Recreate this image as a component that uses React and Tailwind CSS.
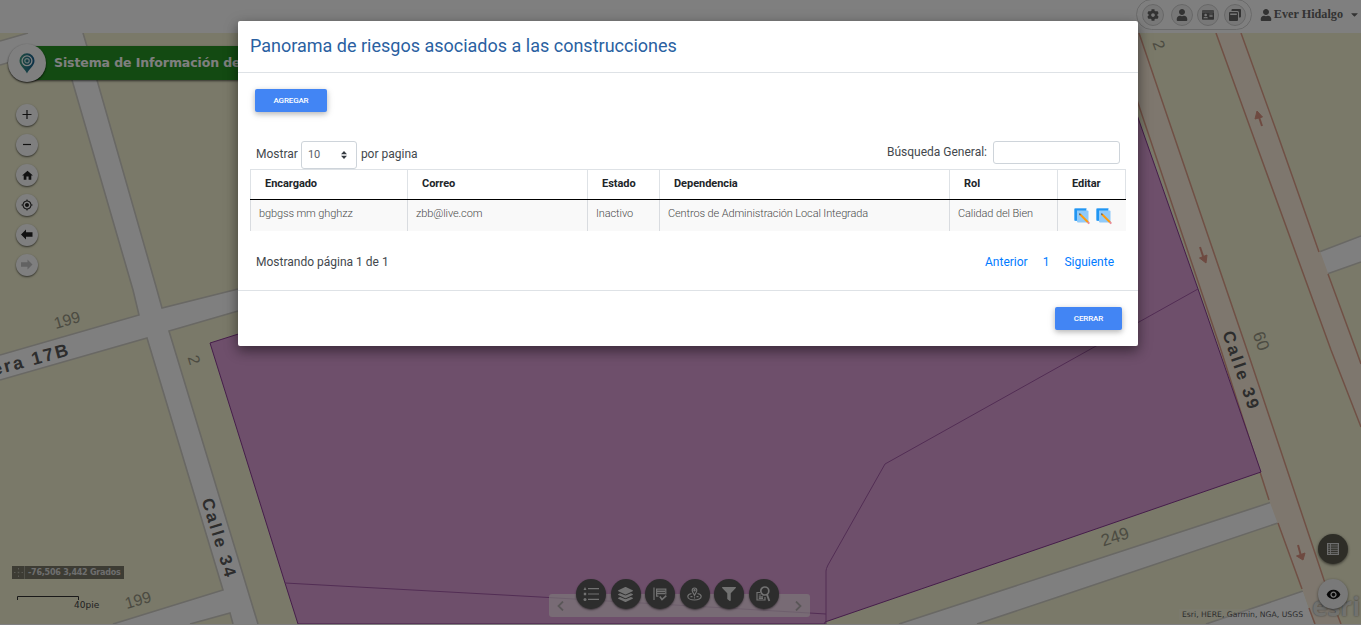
import React from "react";
import { FaCog, FaUser, FaIdCard, FaFilter, FaLayerGroup, FaCaretDown } from "react-icons/fa";
import { MdHome, MdMyLocation, MdVisibility } from "react-icons/md";

const LAND = "#f4f2d2";
const EDGE = "#d2d0c8";

function MapCanvas() {
  return (
    <svg className="block h-[591px] w-full shrink-0" viewBox="0 33 1361 591" preserveAspectRatio="none">
      <rect x="0" y="33" width="1361" height="591" fill={LAND} />
      <g fill="#ffffff">
        <path d="M0 41 L28 33 H83 L97 80 L157 290 L162 308 L238 289 V311 L169 331 L258 624 H233 L223 590 L147 338 L0 380 V355 L139 315 L133 290 L72 80 L62 47 L0 65Z" />
        <path d="M113 624 L223 590 L235 590 L235 612 L190 624Z" />
        <path d="M899 624 L1061 571 L1272 502 L1278 523 L1061 596 L977 624Z" />
        <path d="M1206 624 L1303 591 L1314 624Z" />
        <path d="M1319 252 L1361 236 V262 L1327 274Z" />
      </g>
      <g fill="none" stroke={EDGE} strokeWidth="1.6">
        <path d="M0 41 L28 33 M83 33 L97 80 L157 290 L162 308 L238 289 M0 65 L62 47 L72 80 L133 290 L139 315 L0 355" />
        <path d="M0 380 L147 338 L223 590 L113 624 M190 624 L230 613 L233 624 M258 624 L169 331 L238 311" />
        <path d="M899 624 L1061 571 L1272 502 M977 624 L1061 596 L1278 523 M1206 624 L1303 591 M1319 252 L1361 236 M1361 262 L1327 274" />
      </g>
      <g fill="#fcefdc">
        <path d="M1113 33 H1139 L1172 130 L1247 350 L1324 580 L1341 624 H1315 L1302 589 L1269 500 L1220 350 L1138 103Z" />
        <path d="M1216 33 H1241 L1276 130 L1356 350 L1361 364 V427 L1331 350 L1251 130Z" />
      </g>
      <g fill="none" stroke="#e0a08a" strokeWidth="1.5">
        <path d="M1113 33 L1138 103 L1220 347 L1269 500 M1278 523 L1302 589 M1139 33 L1172 130 L1247 350 L1324 580 L1341 624 M1309 608 L1315 624" />
        <path d="M1216 33 L1251 130 L1331 350 L1361 427 M1241 33 L1276 130 L1319 252 M1328 274 L1356 350 L1361 364" />
      </g>
      <g fill="#dd9482" stroke="#dd9482" strokeWidth="2">
        <path d="M1262 126 L1258 114" />
        <path d="M1257 111 L1255 119 L1262.500 117Z" strokeWidth="1" />
        <path d="M1200 247 L1204 259" />
        <path d="M1206 263 L1199.500 258 L1207 255Z" strokeWidth="1" />
        <path d="M1298 545 L1301 556" />
        <path d="M1303 560 L1296.500 556 L1305 553Z" strokeWidth="1" />
      </g>
      <path
        d="M210 343 L1136 50 V112 L1198 289 L1261 472 L1061 541 L825 622 V624 H298 L285 583Z"
        fill="#dc9ed6"
        stroke="#8a3a94"
        strokeWidth="1"
      />
      <path
        d="M285 583 L540 597 L826 614 M826 624 V571 Q826 569 828 565 L885 464 L1198 289"
        fill="none"
        stroke="#a45aa8"
        strokeWidth="1"
      />
      <g fontFamily="'Liberation Sans', Arial, sans-serif" textAnchor="middle" dominantBaseline="central">
        <g fontSize="17" fill="#989784">
          <text transform="translate(67 320) rotate(-16)" fontSize="16">199</text>
          <text transform="translate(138 600) rotate(-16)" fontSize="16">199</text>
          <text transform="translate(1115 537) rotate(-18)">249</text>
          <text transform="translate(1261 341) rotate(70)">60</text>
          <text transform="translate(194 360) rotate(73)" fontSize="16">2</text>
          <text transform="translate(1159 45) rotate(70)" fontSize="16">2</text>
        </g>
        <g fontSize="17" fontWeight="bold" fill="#5a5a5a" letterSpacing="2.4">
          <text transform="translate(31 359.500) rotate(-15)" fontSize="18" letterSpacing="2.2">era 17B</text>
          <text transform="translate(219 538.5) rotate(73)">Calle 34</text>
          <text transform="translate(1241 371) rotate(71)">Calle 39</text>
        </g>
      </g>
      <path d="M17.500 600 V596.500 H78.500 V600" fill="none" stroke="#333" strokeWidth="1" />
    </svg>
  );
}

function ZoomButton({ children }) {
  return (
    <div className="flex size-[22px] items-center justify-center rounded-full bg-white text-[#222] shadow-[0_1px_2px_rgba(0,0,0,0.6)]">
      {children}
    </div>
  );
}

function MapControls() {
  return (
    <div className="absolute left-4 top-[104px] flex flex-col gap-2">
      <ZoomButton>
        <svg width="12" height="12" viewBox="0 0 12 12" stroke="currentColor" strokeWidth="1.2"><path d="M1.500 5.500H10.500M6 1V10" /></svg>
      </ZoomButton>
      <ZoomButton>
        <svg width="12" height="12" viewBox="0 0 12 12" stroke="currentColor" strokeWidth="1.200"><path d="M2 5.500H10" /></svg>
      </ZoomButton>
      <ZoomButton><MdHome size={13} /></ZoomButton>
      <ZoomButton><MdMyLocation size={12} /></ZoomButton>
      <ZoomButton>
        <svg width="12" height="12" viewBox="0 0 12 12" fill="currentColor"><path d="M0 5.500L5 0.500V3.200H11.500V7.800H5V10.500Z" /></svg>
      </ZoomButton>
      <ZoomButton>
        <svg width="12" height="12" viewBox="0 0 12 12" fill="#c4c4c4"><path d="M11.500 5.500L6.500 0.500V3.200H0V7.800H6.500V10.500Z" /></svg>
      </ZoomButton>
    </div>
  );
}

function Banner() {
  return (
    <div className="absolute left-2 top-11 flex w-[600px] items-center">
      <div className="z-10 flex size-[38px] shrink-0 items-center justify-center rounded-full bg-white shadow-[0_1px_2px_rgba(0,0,0,0.8)]">
        <svg width="16" height="21" viewBox="0 0 16 21">
          <defs>
            <linearGradient id="pin" x1="0" x2="1">
              <stop offset="0" stopColor="#3d9a82" />
              <stop offset="1" stopColor="#185f91" />
            </linearGradient>
          </defs>
          <path d="M8 20.500C6.500 16 0.500 13 0.500 7.700A7.500 7.500 0 0 1 15.500 7.700C15.500 13 9.500 16 8 20.500Z" fill="url(#pin)" />
          <circle cx="8" cy="7.800" r="4.900" fill="none" stroke="#fff" strokeWidth="1.300" />
          <circle cx="8" cy="7.800" r="2.200" fill="none" stroke="#d5eeec" strokeWidth="1.200" />
        </svg>
      </div>
      <div className="-ml-4 flex h-[34px] flex-1 items-center bg-[#269424] pl-6 font-['DejaVu_Sans'] text-[12.5px] font-bold text-white shadow-[0_1px_2px_rgba(0,0,0,0.6)]">
        <span className="whitespace-nowrap tracking-[-0.1px]">Sistema de Información de Bienes Inmuebles</span>
      </div>
    </div>
  );
}

function HeaderIcon({ children }) {
  return (
    <div className="flex size-[22px] items-center justify-center rounded-full border border-[#d0d0d0] bg-[#f0f0f0] text-[#666]">
      {children}
    </div>
  );
}

function TopBar() {
  return (
    <header className="flex h-[33px] shrink-0 items-start justify-end bg-white pr-px">
      <div className="-mt-px flex h-[31px] items-center gap-[4.5px] rounded-full border border-[#d4d4d4] px-[5px]">
        <div className="mr-[2px]">
          <HeaderIcon><FaCog size={12} /></HeaderIcon>
        </div>
        <HeaderIcon><FaUser size={12} /></HeaderIcon>
        <HeaderIcon><FaIdCard size={12} /></HeaderIcon>
        <HeaderIcon>
          <svg width="12" height="12" viewBox="0 0 12 12" fill="currentColor">
            <path d="M3.500 0H11A1 1 0 0 1 12 1V7.500A1 1 0 0 1 11 8.500H10V3.500A1.500 1.500 0 0 0 8.500 2H2.500V1A1 1 0 0 1 3.500 0Z" />
            <path d="M1 3H8A1 1 0 0 1 9 4V11A1 1 0 0 1 8 12H1A1 1 0 0 1 0 11V4A1 1 0 0 1 1 3ZM1.200 4.500V6H7.800V4.500Z" fillRule="evenodd" />
          </svg>
        </HeaderIcon>
      </div>
      <div className="ml-2 flex h-[29px] items-center text-[#666]">
        <FaUser size={12} />
        <span className="ml-[2px] whitespace-nowrap font-['Liberation_Serif'] text-[12.2px] font-bold">Ever Hidalgo</span>
        <FaCaretDown size={11} className="ml-[6px]" />
      </div>
    </header>
  );
}

function ToolButton({ children }) {
  return (
    <div className="flex size-[30px] items-center justify-center rounded-full bg-[#5a5a5a] text-[#e4e4e4] shadow-[0_1px_2px_rgba(0,0,0,0.5)]">
      {children}
    </div>
  );
}

function Toolbar() {
  return (
    <div className="absolute left-[549px] top-[579px] h-[38px] w-[261px]">
      <div className="flex h-[38px] items-end">
        <div className="flex h-[23px] w-full items-center justify-between rounded-[3px] bg-[#fbf4f4]/65 px-2 text-[#b4adb0]">
          <svg width="8" height="10" viewBox="0 0 8 10" fill="none" stroke="currentColor" strokeWidth="1.800"><path d="M6 0.500L1.500 5L6 9.500" /></svg>
          <svg width="8" height="10" viewBox="0 0 8 10" fill="none" stroke="currentColor" strokeWidth="1.800"><path d="M2 0.500L6.500 5L2 9.500" /></svg>
        </div>
      </div>
      <div className="absolute left-[27px] top-0 flex gap-[4.6px]">
        <ToolButton>
          <svg width="16" height="16" viewBox="0 0 16 16" fill="currentColor">
            <path d="M5 2H16V3.200H5ZM5 7.400H16V8.600H5ZM5 12.800H16V14H5ZM0.500 4L2 1L3.500 4ZM0.800 6.800H3.200V9.200H0.800Z" />
            <circle cx="2" cy="13.400" r="1.500" />
          </svg>
        </ToolButton>
        <ToolButton><FaLayerGroup size={15} /></ToolButton>
        <ToolButton>
          <svg width="14" height="14" viewBox="0 0 14 14" fill="none" stroke="currentColor" strokeWidth="1.200">
            <path d="M1 0.500V13M5.500 9.200H3.600V2.200H12.800V7.500" />
            <path d="M4 4.200H12M4 6.600H12" strokeWidth="1.500" />
            <path d="M6.800 9.500L9 12.500L13.300 8.600" strokeWidth="1.600" />
          </svg>
        </ToolButton>
        <ToolButton>
          <svg width="15" height="14" viewBox="0 0 15 14" fill="none" stroke="currentColor" strokeWidth="1.200">
            <path d="M7.500 8.500C6.500 6.200 5.200 5 5.200 3.300A2.300 2.300 0 0 1 9.800 3.300C9.800 5 8.500 6.200 7.500 8.500Z" />
            <circle cx="7.500" cy="3.200" r="0.600" fill="currentColor" />
            <path d="M4.500 6.500C2.200 7 0.800 8 0.800 9.400C0.800 11.500 3.800 13 7.500 13S14.200 11.500 14.200 9.400C14.200 8 12.800 7 10.500 6.500" />
            <path d="M3.500 9.700H5.500M9.500 9.700H11.500M7.500 10.200V11.500" />
          </svg>
        </ToolButton>
        <ToolButton><FaFilter size={14} /></ToolButton>
        <ToolButton>
          <svg width="15" height="16" viewBox="0 0 15 16" fill="none" stroke="currentColor" strokeWidth="1.200">
            <circle cx="8.800" cy="5" r="4" strokeWidth="1.700" />
            <path d="M11 8.500L13.300 15" strokeWidth="1.900" />
            <path d="M4 6.500H1V14H9V11M2.800 9H5M2.800 10.800H7M2.800 12.400H7" />
          </svg>
        </ToolButton>
      </div>
    </div>
  );
}

function MapFooter() {
  return (
    <>
      <div className="absolute left-3 top-[566px] flex h-[13px] w-28 items-center bg-[#7a7969] text-[#ddd]">
        <div className="flex h-full w-[13px] items-center justify-center border-r border-[#a5a494] text-[#b5b5a8]">
          <svg width="9" height="9" viewBox="0 0 9 9" fill="currentColor">
            <path d="M4 0H5V1.500H4ZM4 7.500H5V9H4ZM0 4H1.500V5H0ZM7.500 4H9V5H7.500ZM3.700 3.700H5.300V5.300H3.700Z" />
          </svg>
        </div>
        <span className="ml-[3px] whitespace-nowrap font-['DejaVu_Sans'] text-[8px] font-bold tracking-[-0.22px]">-76,506 3,442 Grados</span>
      </div>
      <span className="absolute left-[74px] top-[599px] font-['DejaVu_Sans'] text-[9px] leading-3 text-[#444]">40pie</span>
      <span className="absolute left-[1312px] top-[590px] font-['Open_Sans'] text-[27px] font-bold leading-[32px] tracking-[-0.5px] text-[#e2e2dc] [text-shadow:0_0_2px_#777]">
        esri
      </span>
      <div className="absolute left-[1179px] top-[609px] flex h-[11px] w-32 items-center whitespace-nowrap bg-white/20 pl-[3px] font-['DejaVu_Sans'] text-[7.7px] text-[#5c5c5c]">
        Esri, HERE, Garmin, NGA, USGS
      </div>
      <div className="absolute left-[1318px] top-[534px] flex size-[30px] items-center justify-center rounded-full bg-[#5c5b4e] text-[#ddd] shadow-[0_1px_3px_rgba(0,0,0,0.6)]">
        <svg width="12" height="12" viewBox="0 0 12 12" fill="none" stroke="currentColor">
          <path d="M0.600 0.600H11.400V11.400H0.600Z" strokeWidth="1.200" />
          <path d="M3.500 1V11M1 3H11M1 5.200H11M1 7.300H11M1 9.400H11" strokeWidth="0.900" />
        </svg>
      </div>
      <div className="absolute left-[1318px] top-[579px] flex size-[30px] items-center justify-center rounded-full bg-[#f2f2f2] text-[#111] shadow-[0_1px_3px_rgba(0,0,0,0.5)]">
        <MdVisibility size={15} />
      </div>
    </>
  );
}

function EditIcon() {
  return (
    <svg width="18" height="18" viewBox="0 0 18 18">
      <path d="M1 2.500A1.500 1.500 0 0 1 2.500 1H13.500V4H4V14H2.500A1.500 1.500 0 0 1 1 12.500Z" fill="#64b5f6" />
      <path d="M2 2H13V4H4V13.500H2Z" fill="#2196f3" />
      <path d="M4 3.500H14.500A1 1 0 0 1 15.500 4.500V15.500H5A1 1 0 0 1 4 14.500Z" fill="#90caf9" />
      <path d="M7 7.300L15 15.300" stroke="#ff9a0a" strokeWidth="2" />
      <path d="M6 6.300L8 6.900L6.600 8.300Z" fill="#444" />
      <path d="M14.700 15L16.300 16.600" stroke="#e88b96" strokeWidth="2" />
    </svg>
  );
}

function ActionButton({ children, className }) {
  return (
    <button
      className={`flex h-[23px] items-center justify-center rounded-[2px] bg-[#4285f4] text-[8px] font-medium tracking-[-0.15px] text-white shadow-[0_2px_5px_rgba(0,0,0,0.2),0_2px_8px_rgba(0,0,0,0.12)] ${className}`}
    >
      {children}
    </button>
  );
}

const columns = ["Encargado", "Correo", "Estado", "Dependencia", "Rol", "Editar"];
const row = ["bgbgss mm ghghzz", "zbb@live.com", "Inactivo", "Centros de Administración Local Integrada", "Calidad del Bien"];

function Table() {
  return (
    <div>
      <div className="grid grid-cols-[157px_180px_72px_290px_108px_69px] border-b border-black">
        {columns.map((c) => (
          <div
            key={c}
            className="h-[30px] border-l border-t border-[#dee2e6] pl-[14px] pt-[5px] text-[11px] font-bold leading-[17px] tracking-[-0.05px] text-[#212529] last:border-r"
          >
            {c}
          </div>
        ))}
      </div>
      <div className="grid h-[31px] grid-cols-[157px_180px_72px_290px_108px_69px] bg-[#f9f9f9]">
        {row.map((c) => (
          <div key={c} className="whitespace-nowrap border-l border-[#d9dce0] pl-2 pt-[5px] text-[11px] font-light leading-[17px] tracking-[-0.11px] text-[#4a4a4a]">
            {c}
          </div>
        ))}
        <div className="flex gap-1 border-l border-[#d9dce0] pl-[15px] pt-[7px]">
          <EditIcon />
          <EditIcon />
        </div>
      </div>
    </div>
  );
}

function Modal() {
  return (
    <div className="flex h-[325px] w-[900px] flex-col rounded-[2px] bg-white font-['Roboto'] text-[#212529] shadow-[0_5px_11px_rgba(0,0,0,0.28),0_4px_15px_rgba(0,0,0,0.25)]">
      <div className="flex h-[52px] shrink-0 items-center border-b border-[#dee2e6] pl-3">
        <h4 className="-mt-px whitespace-nowrap text-[18px] leading-6 text-[#2a61a1]">Panorama de riesgos asociados a las construcciones</h4>
      </div>
      <div className="flex h-[217px] shrink-0 flex-col px-3 pt-4">
        <ActionButton className="ml-[5px] w-[72px]">AGREGAR</ActionButton>
        <div className="mt-[29px] flex h-7 items-start justify-between pl-[6px] pr-[6px] text-[12px] text-[#43484d]">
          <div className="flex h-7 items-center">
            <span className="pb-[2px]">Mostrar</span>
            <div className="ml-[3px] mr-1 flex h-7 w-14 items-center justify-between rounded-[3px] border border-[#ced4da] pl-[6px] pr-[9px] text-[11px] text-[#5a6168]">
              <span>10</span>
              <svg width="6" height="8" viewBox="0 0 6 8" fill="#343a40"><path d="M0 3.300L3 0L6 3.300ZM0 4.700H6L3 8Z" /></svg>
            </div>
            <span className="pb-[2px]">por pagina</span>
          </div>
          <div className="flex h-[23px] items-center">
            <span className="pb-[2px]">Búsqueda General:</span>
            <div className="ml-[6px] h-[23px] w-[127px] rounded-[3px] border border-[#ced4da] bg-white" />
          </div>
        </div>
        <Table />
        <div className="mt-[22px] flex items-center justify-between pl-[6px] pr-3 text-[12px] leading-[18px] text-[#43484d]">
          <span>Mostrando página 1 de 1</span>
          <div className="flex gap-[15px] text-[#007bff]">
            <a>Anterior</a>
            <a>1</a>
            <a>Siguiente</a>
          </div>
        </div>
      </div>
      <div className="flex flex-1 items-start justify-end border-t border-[#dee2e6] pr-4 pt-4">
        <ActionButton className="w-[67px]">CERRAR</ActionButton>
      </div>
    </div>
  );
}

export default function App() {
  return (
    <div className="relative flex h-[625px] w-[1361px] flex-col overflow-hidden bg-white">
      <TopBar />
      <MapCanvas />
      <Banner />
      <MapControls />
      <Toolbar />
      <MapFooter />
      <div className="absolute inset-0 z-20 flex items-start bg-black/50 pl-[238px] pt-[21px]">
        <Modal />
      </div>
    </div>
  );
}
